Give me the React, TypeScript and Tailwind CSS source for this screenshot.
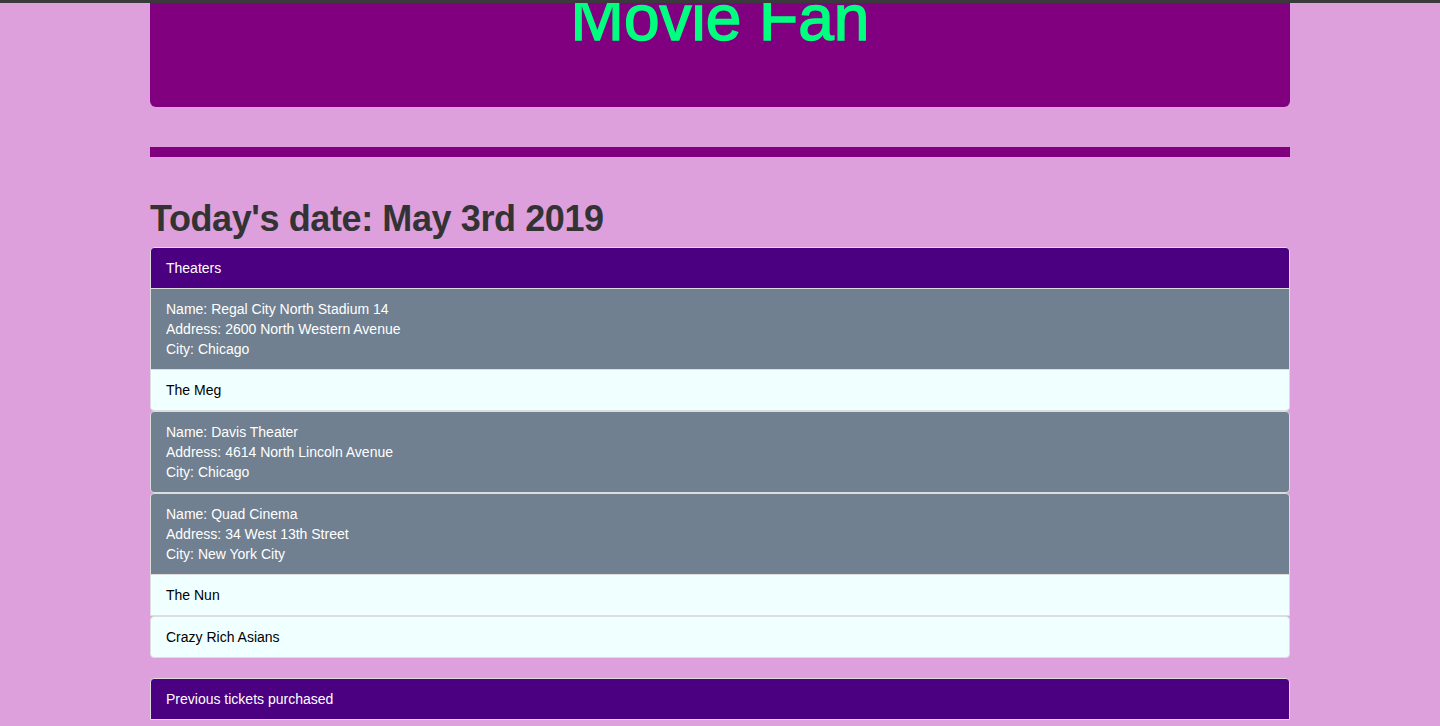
const theaters = [
  {
    name: 'Regal City North Stadium 14',
    address: '2600 North Western Avenue',
    city: 'Chicago',
    movies: ['The Meg'],
  },
  {
    name: 'Davis Theater',
    address: '4614 North Lincoln Avenue',
    city: 'Chicago',
    movies: [],
  },
  {
    name: 'Quad Cinema',
    address: '34 West 13th Street',
    city: 'New York City',
    movies: ['The Nun', 'Crazy Rich Asians'],
  },
];

const item = 'border border-[#dddddd] px-[15px] py-[10px] leading-[20px] -mb-px';

const TheaterBlock = ({ t, first }: { t: (typeof theaters)[number]; first: boolean }) => (
  <>
    <div className={`${item} bg-[#708090] text-white ${first ? '' : 'rounded-t-[4px]'} ${t.movies.length ? '' : 'rounded-b-[4px] mb-0'}`}>
      <div>Name: {t.name}</div>
      <div>Address: {t.address}</div>
      <div>City: {t.city}</div>
    </div>
    {t.movies.map((m, i) => (
      <div
        key={m}
        className={`${item} bg-[#f0ffff] text-black ${i === t.movies.length - 1 ? 'rounded-b-[4px] mb-0' : ''} ${i > 0 ? 'rounded-t-[4px] mt-px' : ''}`}
      >
        {m}
      </div>
    ))}
  </>
);

export default function App() {
  return (
    <div className="min-h-screen bg-[#dda0dd] text-[14px] font-['Liberation_Sans',Arial,sans-serif]">
      <div className="h-[3px] bg-[#3a3a3c]" />
      <div className="mx-auto w-[1140px]">
        <div className="h-[104px] overflow-hidden rounded-b-[6px] bg-[#800080]">
          <h1 className="mt-[-17px] text-center text-[64px] leading-none text-[#00ff7f] [-webkit-text-stroke:1.5px_#00ff7f]">
            Movie Fan
          </h1>
        </div>
        <div className="mt-[40px] h-[10px] bg-[#800080]" />
        <h2 className="mt-[42px] mb-[8px] text-[36px] leading-[40px] font-bold tracking-[-0.4px] text-[#333333]">
          Today's date: May 3rd 2019
        </h2>
        <div className="flex flex-col">
          <div className={`${item} rounded-t-[4px] bg-[#4b0082] text-white`}>Theaters</div>
          {theaters.map((t, i) => (
            <TheaterBlock key={t.name} t={t} first={i === 0} />
          ))}
        </div>
        <div className="mt-[20px] flex flex-col">
          <div className={`${item} mb-0 rounded-t-[4px] bg-[#4b0082] text-white`}>Previous tickets purchased</div>
          <p className="px-[16px] pt-[4px] leading-[20px] text-[#333333]">tickets previously purchased</p>
        </div>
      </div>
    </div>
  );
}
